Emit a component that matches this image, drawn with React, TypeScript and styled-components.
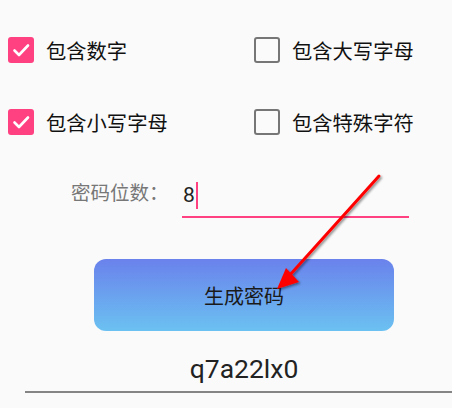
import React, { useState } from 'react';
import styled, { createGlobalStyle } from 'styled-components';

const GlobalStyle = createGlobalStyle`
  html, body {
    margin: 0;
    padding: 0;
    background: #fafafa;
  }
  body {
    font-family: Roboto, "Noto Sans CJK SC", sans-serif;
    width: 452px;
    height: 408px;
    overflow: hidden;
  }
`;

const Screen = styled.div`
  position: relative;
  width: 452px;
  height: 408px;
  background: #fafafa;
  padding-top: 26px;
  box-sizing: border-box;
`;

const OptionGrid = styled.div`
  display: grid;
  grid-template-columns: 246px 1fr;
  row-gap: 24px;
  padding-left: 8px;
`;

const Option = styled.label`
  display: flex;
  align-items: center;
  gap: 12px;
  height: 48px;
  font-family: "Noto Sans CJK SC", sans-serif;
  font-size: 20.3px;
  color: #111;
`;

const Box = styled.span<{ $checked: boolean }>`
  display: flex;
  align-items: center;
  justify-content: center;
  width: 26px;
  height: 26px;
  box-sizing: border-box;
  border-radius: 3px;
  background: ${p => (p.$checked ? '#ff4081' : 'transparent')};
  border: ${p => (p.$checked ? 'none' : '2.6px solid #767676')};
`;

const FieldRow = styled.div`
  display: flex;
  align-items: flex-end;
  margin-top: 20px;
  padding-left: 71px;
  height: 52px;
`;

const FieldLabel = styled.span`
  font-family: "Noto Sans CJK SC", sans-serif;
  font-size: 19.5px;
  color: #777;
  width: 111px;
  padding-bottom: 12px;
`;

const Field = styled.div`
  display: flex;
  align-items: center;
  width: 227px;
  height: 40px;
  border-bottom: 2px solid #ff4081;
  box-sizing: border-box;
  padding-bottom: 4px;
`;

const FieldValue = styled.span`
  font-family: Roboto, sans-serif;
  font-size: 21px;
  color: #222;
  margin-left: 1px;
`;

const Caret = styled.span`
  display: inline-block;
  width: 2px;
  height: 27px;
  background: #ff4081;
  margin-left: 1px;
`;

const GenerateButton = styled.button`
  display: flex;
  align-items: center;
  justify-content: center;
  width: 300px;
  height: 72px;
  margin: 41px 0 0 94px;
  border: none;
  border-radius: 12px;
  background: linear-gradient(180deg, #6a82ec 0%, #6bc1f1 100%);
  font-family: "Noto Sans CJK SC", sans-serif;
  font-size: 20px;
  color: #1a1a1a;
  padding: 0;
`;

const Result = styled.div`
  margin: 14px 0 0 25px;
  height: 46px;
  border-bottom: 2px solid #858585;
  display: flex;
  align-items: center;
  justify-content: center;
  padding-left: 11px;
  font-family: Roboto, sans-serif;
  font-size: 26.5px;
  color: #222;
`;

const Annotation = styled.svg`
  position: absolute;
  left: 0;
  top: 0;
  pointer-events: none;
`;

const Check = () => (
  <svg width="20" height="20" viewBox="0 0 20 20">
    <path d="M3.5 10.5 L8 15 L17 5.5" fill="none" stroke="#fff" strokeWidth="2.6" strokeLinecap="round" strokeLinejoin="round" />
  </svg>
);

const options = [
  { label: '包含数字', checked: true },
  { label: '包含大写字母', checked: false },
  { label: '包含小写字母', checked: true },
  { label: '包含特殊字符', checked: false },
];

export default function App() {
  const [opts] = useState(options);
  return (
    <Screen>
      <GlobalStyle />
      <OptionGrid>
        {opts.map(o => (
          <Option key={o.label}>
            <Box $checked={o.checked}>{o.checked && <Check />}</Box>
            {o.label}
          </Option>
        ))}
      </OptionGrid>
      <FieldRow>
        <FieldLabel>密码位数：</FieldLabel>
        <Field>
          <FieldValue>8</FieldValue>
          <Caret />
        </Field>
      </FieldRow>
      <GenerateButton>生成密码</GenerateButton>
      <Result>q7a22lx0</Result>
      <Annotation width="452" height="408" viewBox="0 0 452 408">
        <defs>
          <filter id="shadow" x="-20%" y="-20%" width="140%" height="140%">
            <feDropShadow dx="1.5" dy="1.5" stdDeviation="1.2" floodColor="#000" floodOpacity="0.45" />
          </filter>
        </defs>
        <g filter="url(#shadow)">
          <line x1="379" y1="176" x2="289" y2="276" stroke="#ff0000" strokeWidth="3" strokeLinecap="round" />
          <polygon points="277,289 286,268 299,282" fill="#ff0000" />
        </g>
      </Annotation>
    </Screen>
  );
}
